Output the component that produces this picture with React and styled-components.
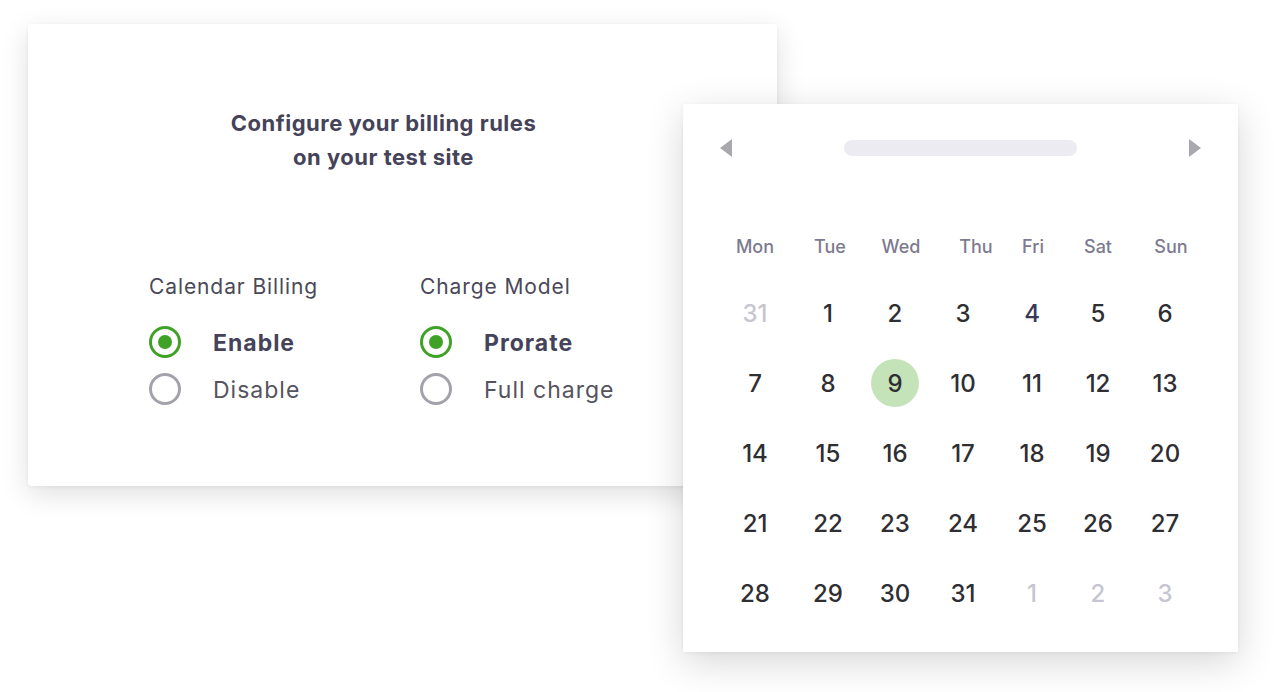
import React from 'react';
import styled, { createGlobalStyle } from 'styled-components';

const GlobalStyle = createGlobalStyle`
  body {
    margin: 0;
    background: #ffffff;
    font-family: Inter, "Liberation Sans", sans-serif;
  }
`;

// weekday labels sit a little off the number columns in the design
const weekdays = [
  { d: 'Mon', shift: 0 },
  { d: 'Tue', shift: 2 },
  { d: 'Wed', shift: 6 },
  { d: 'Thu', shift: 13 },
  { d: 'Fri', shift: 1 },
  { d: 'Sat', shift: 0 },
  { d: 'Sun', shift: 6 },
];

const weeks = [
  [{ n: 31, muted: true }, { n: 1 }, { n: 2 }, { n: 3 }, { n: 4, accent: true }, { n: 5 }, { n: 6 }],
  [{ n: 7 }, { n: 8 }, { n: 9, selected: true }, { n: 10 }, { n: 11 }, { n: 12 }, { n: 13 }],
  [{ n: 14 }, { n: 15 }, { n: 16 }, { n: 17 }, { n: 18 }, { n: 19 }, { n: 20 }],
  [{ n: 21 }, { n: 22 }, { n: 23 }, { n: 24 }, { n: 25 }, { n: 26 }, { n: 27 }],
  [{ n: 28 }, { n: 29 }, { n: 30 }, { n: 31 }, { n: 1, muted: true }, { n: 2, muted: true }, { n: 3, muted: true }],
];

const groups = [
  { label: 'Calendar Billing', options: ['Enable', 'Disable'] },
  { label: 'Charge Model', options: ['Prorate', 'Full charge'] },
];

const Radio = ({ checked }) => (
  <RadioCircle $checked={checked}>{checked && <RadioDot />}</RadioCircle>
);

const App = () => {
  return (
    <Page>
      <GlobalStyle />
      <BillingCard>
        <Title>
          Configure your billing rules
          <br />
          on your test site
        </Title>
        <Groups>
          {groups.map(g => (
            <Group key={g.label}>
              <GroupLabel>{g.label}</GroupLabel>
              {g.options.map((opt, i) => (
                <Option key={opt}>
                  <Radio checked={i === 0} />
                  <OptionText $checked={i === 0}>{opt}</OptionText>
                </Option>
              ))}
            </Group>
          ))}
        </Groups>
      </BillingCard>

      <CalendarCard>
        <CalHeader>
          <Arrow viewBox="0 0 12 18">
            <polygon points="12,0 12,18 0,9" />
          </Arrow>
          <MonthPill />
          <Arrow viewBox="0 0 12 18">
            <polygon points="0,0 0,18 12,9" />
          </Arrow>
        </CalHeader>
        <WeekdayRow>
          {weekdays.map(w => (
            <Weekday key={w.d} $shift={w.shift}>
              {w.d}
            </Weekday>
          ))}
        </WeekdayRow>
        {weeks.map((week, wi) => (
          <WeekRow key={wi}>
            {week.map((day, di) => (
              <DayCell key={di}>
                <Day $muted={day.muted} $accent={day.accent} $selected={day.selected}>
                  {day.n}
                </Day>
              </DayCell>
            ))}
          </WeekRow>
        ))}
      </CalendarCard>
    </Page>
  );
};

export default App;

//Page
const Page = styled.div`
  display: flex;
  align-items: flex-start;
  padding: 24px 0 0 28px;
  width: 1274px;
  height: 692px;
  box-sizing: border-box;
  overflow: hidden;
`;

//Billing card
const BillingCard = styled.div`
  flex: none;
  width: 749px;
  height: 462px;
  box-sizing: border-box;
  padding: 82px 0 0 121px;
  background: #ffffff;
  border-radius: 3px;
  box-shadow: 0 8px 28px rgba(0, 0, 0, 0.13), 0 1px 4px rgba(0, 0, 0, 0.05);
`;

const Title = styled.h2`
  width: 469px;
  margin: 0;
  text-align: center;
  font-size: 22px;
  line-height: 34px;
  font-weight: 700;
  letter-spacing: 0.5px;
  color: #45435a;
`;

const Groups = styled.div`
  display: flex;
  margin-top: 98px;
`;

const Group = styled.div`
  display: flex;
  flex-direction: column;
  gap: 7px;
  width: 271px;
`;

const GroupLabel = styled.div`
  font-size: 21px;
  line-height: 30px;
  letter-spacing: 0.9px;
  color: #4a4859;
  margin-bottom: 13px;
`;

const Option = styled.div`
  display: flex;
  align-items: center;
  gap: 32px;
  height: 40px;
`;

const RadioCircle = styled.div`
  display: flex;
  align-items: center;
  justify-content: center;
  width: 32px;
  height: 32px;
  box-sizing: border-box;
  border-radius: 50%;
  border: 3px solid ${p => (p.$checked ? '#40a127' : '#a3a2aa')};
`;

const RadioDot = styled.div`
  width: 14px;
  height: 14px;
  border-radius: 50%;
  background: #40a127;
`;

const OptionText = styled.span`
  padding-top: 2px;
  font-size: 23px;
  letter-spacing: 1px;
  font-weight: ${p => (p.$checked ? 700 : 400)};
  color: ${p => (p.$checked ? '#45435a' : '#55535f')};
`;

//Calendar card
const CalendarCard = styled.div`
  flex: none;
  width: 555px;
  height: 548px;
  box-sizing: border-box;
  margin: 80px 0 0 -94px;
  padding: 32px 37px 24px 38px;
  background: #ffffff;
  box-shadow: 0 10px 36px rgba(0, 0, 0, 0.16), 0 1px 4px rgba(0, 0, 0, 0.05);
`;

const CalHeader = styled.div`
  display: flex;
  align-items: center;
  justify-content: space-between;
  height: 24px;
  margin-left: -1px;
`;

const Arrow = styled.svg`
  width: 12px;
  height: 18px;
  fill: #a9a8b0;
`;

const MonthPill = styled.div`
  width: 233px;
  height: 16px;
  border-radius: 8px;
  background: #ecebf2;
`;

const columns = '68px 78px 56px 80px 58px 74px 60px';

const WeekdayRow = styled.div`
  display: grid;
  grid-template-columns: ${columns};
  height: 40px;
  margin-top: 66px;
  margin-bottom: 12px;
`;

const Weekday = styled.div`
  display: flex;
  align-items: center;
  justify-content: center;
  margin-left: ${p => p.$shift * 2}px;
  font-size: 18px;
  font-weight: 500;
  color: #7d7b90;
  white-space: nowrap;
`;

const WeekRow = styled.div`
  display: grid;
  grid-template-columns: ${columns};
  height: 70px;
`;

const DayCell = styled.div`
  display: flex;
  align-items: center;
  justify-content: center;
`;

const Day = styled.div`
  display: flex;
  align-items: center;
  justify-content: center;
  flex: none;
  width: 48px;
  height: 48px;
  border-radius: 50%;
  font-size: 24px;
  font-weight: 500;
  background: ${p => (p.$selected ? '#c5e3b8' : 'transparent')};
  color: ${p => (p.$muted ? '#c7c6d0' : p.$accent ? '#393859' : '#2e2e33')};
`;
